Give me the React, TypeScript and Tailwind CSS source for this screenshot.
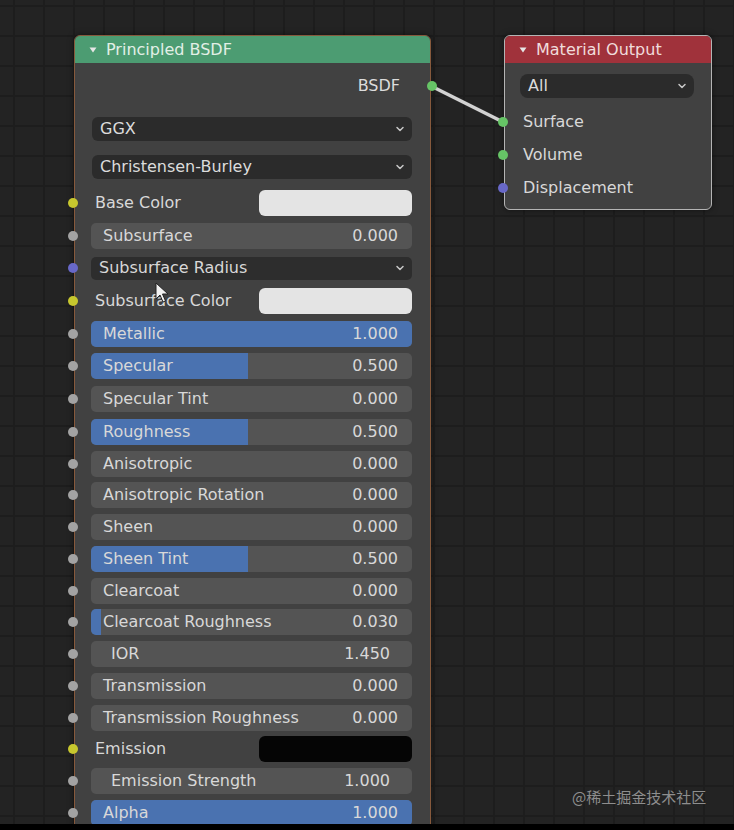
import { ChevronDown } from "lucide-react";

type Row =
	| { kind: "slider"; label: string; value: string; fill: number; socket: string; indent?: boolean }
	| { kind: "color"; label: string; swatch: string; socket: string }
	| { kind: "menu"; label: string; socket: string };

const GREY = "bg-[#a3a3a3]";
const YELLOW = "bg-[#c7c72e]";
const PURPLE = "bg-[#6868c8]";
const GREEN = "bg-[#66c466]";

const rows: Row[] = [
	{ kind: "color", label: "Base Color", swatch: "bg-[#e4e4e4]", socket: YELLOW },
	{ kind: "slider", label: "Subsurface", value: "0.000", fill: 0, socket: GREY },
	{ kind: "menu", label: "Subsurface Radius", socket: PURPLE },
	{ kind: "color", label: "Subsurface Color", swatch: "bg-[#e4e4e4]", socket: YELLOW },
	{ kind: "slider", label: "Metallic", value: "1.000", fill: 100, socket: GREY },
	{ kind: "slider", label: "Specular", value: "0.500", fill: 49, socket: GREY },
	{ kind: "slider", label: "Specular Tint", value: "0.000", fill: 0, socket: GREY },
	{ kind: "slider", label: "Roughness", value: "0.500", fill: 49, socket: GREY },
	{ kind: "slider", label: "Anisotropic", value: "0.000", fill: 0, socket: GREY },
	{ kind: "slider", label: "Anisotropic Rotation", value: "0.000", fill: 0, socket: GREY },
	{ kind: "slider", label: "Sheen", value: "0.000", fill: 0, socket: GREY },
	{ kind: "slider", label: "Sheen Tint", value: "0.500", fill: 49, socket: GREY },
	{ kind: "slider", label: "Clearcoat", value: "0.000", fill: 0, socket: GREY },
	{ kind: "slider", label: "Clearcoat Roughness", value: "0.030", fill: 3, socket: GREY },
	{ kind: "slider", label: "IOR", value: "1.450", fill: 0, socket: GREY, indent: true },
	{ kind: "slider", label: "Transmission", value: "0.000", fill: 0, socket: GREY },
	{ kind: "slider", label: "Transmission Roughness", value: "0.000", fill: 0, socket: GREY },
	{ kind: "color", label: "Emission", swatch: "bg-[#050505]", socket: YELLOW },
	{ kind: "slider", label: "Emission Strength", value: "1.000", fill: 0, socket: GREY, indent: true },
	{ kind: "slider", label: "Alpha", value: "1.000", fill: 100, socket: GREY },
];

function Socket({ color, className = "" }: { color: string; className?: string }) {
	return (
		<span
			className={`absolute top-1/2 -translate-y-1/2 w-[10px] h-[10px] rounded-full ${color} ${className}`}
		></span>
	);
}

function Triangle() {
	return (
		<svg width="8" height="6" viewBox="0 0 8 6" className="shrink-0">
			<path d="M0.5 0.5 L7.5 0.5 L4 5.5 Z" fill="#e6e6e6" />
		</svg>
	);
}

function NodeRow({ row, first, tight }: { row: Row; first: boolean; tight: boolean }) {
	// the video frame packs the lower rows a touch closer than the upper ones
	const spacing = first ? "" : tight ? "mt-[5.75px]" : "mt-[6.7px]";
	return (
		<div className={`relative flex items-center h-[26px] pl-[16px] pr-[18px] ${spacing}`}>
			<Socket color={row.socket} className="left-[-7px]" />
			{row.kind === "slider" && (
				<div className="relative flex-1 h-full rounded-[5px] bg-[#545454] overflow-hidden">
					{row.fill > 0 && (
						<div
							className="absolute inset-y-0 left-0 bg-[#4a72b0]"
							style={{ width: `${row.fill}%` }}
						></div>
					)}
					<div
						className={`relative flex items-center justify-between h-full text-[#d8d8d8] ${
							row.indent ? "pl-[20px] pr-[22px]" : "pl-[12px] pr-[14px]"
						}`}
					>
						<span>{row.label}</span>
						<span>{row.value}</span>
					</div>
				</div>
			)}
			{row.kind === "color" && (
				<div className="flex-1 flex items-center justify-between h-full">
					<span className="pl-[4px] text-[#d8d8d8]">{row.label}</span>
					<div className={`w-[153px] h-full rounded-[6px] ${row.swatch}`}></div>
				</div>
			)}
			{row.kind === "menu" && (
				<div className="flex-1 flex items-center justify-between h-[23px] rounded-[5px] bg-[#2d2d2d] pl-[8px] pr-[6px] text-[#d8d8d8]">
					<span>{row.label}</span>
					<ChevronDown size={12} strokeWidth={3} className="text-[#c8c8c8]" />
				</div>
			)}
		</div>
	);
}

function Dropdown({ label, className = "" }: { label: string; className?: string }) {
	return (
		<div
			className={`flex items-center justify-between h-[24px] rounded-[6px] bg-[#2b2b2b] pl-[8px] pr-[6px] text-[#dcdcdc] ${className}`}
		>
			<span>{label}</span>
			<ChevronDown size={12} strokeWidth={3} className="text-[#c8c8c8]" />
		</div>
	);
}

function PrincipledNode() {
	return (
		<div className="absolute left-[74px] top-[35px] w-[357px] h-[820px] rounded-[6px] border border-[#86593c] bg-[#414141] shadow-[0_0_6px_rgba(0,0,0,0.5)]">
			<div className="flex items-center gap-[9px] h-[27px] pl-[14px] rounded-t-[5px] bg-[#4c9c72] text-[#e2efe6]">
				<Triangle />
				<span>Principled BSDF</span>
			</div>
			<div className="relative flex items-center justify-end h-[24px] mt-[11px] pr-[30px] text-[#dcdcdc]">
				<span>BSDF</span>
				<Socket color={GREEN} className="right-[-7px]" />
			</div>
			<div className="pl-[17px] pr-[18px]">
				<Dropdown label="GGX" className="mt-[19px] h-[23px]" />
				<Dropdown label="Christensen-Burley" className="mt-[14px]" />
			</div>
			<div className="flex flex-col mt-[11px]">
				{rows.map((r, i) => (
					<NodeRow key={r.label} row={r} first={i === 0} tight={i > 7} />
				))}
			</div>
		</div>
	);
}

function OutputNode() {
	return (
		<div className="absolute left-[504px] top-[35px] w-[208px] h-[175px] rounded-[6px] border border-[#b4b4b4] bg-[#414141] shadow-[0_0_6px_rgba(0,0,0,0.5)]">
			<div className="flex items-center gap-[9px] h-[27px] pl-[14px] rounded-t-[5px] bg-[#a0323b] text-[#f0dcdc]">
				<Triangle />
				<span>Material Output</span>
			</div>
			<div className="pl-[15px] pr-[17px]">
				<Dropdown label="All" className="mt-[11px] rounded-[8px]" />
			</div>
			<div className="flex flex-col gap-[9px] mt-[12px] text-[#d8d8d8]">
				{[
					{ label: "Surface", color: GREEN },
					{ label: "Volume", color: GREEN },
					{ label: "Displacement", color: PURPLE },
				].map((s) => (
					<div key={s.label} className="relative flex items-center h-[24px] pl-[18px]">
						<Socket color={s.color} className="left-[-7px]" />
						<span>{s.label}</span>
					</div>
				))}
			</div>
		</div>
	);
}

export default function App() {
	return (
		<div className="w-[734px] h-[830px] bg-black overflow-hidden font-['DejaVu_Sans',sans-serif] text-[16px] leading-none">
			<div className="relative w-[734px] h-[824px] overflow-hidden bg-[#232323] bg-[linear-gradient(to_right,#1d1d1d_2px,transparent_2px),linear-gradient(to_bottom,#1d1d1d_2px,transparent_2px)] bg-[length:30px_30px] bg-[position:13px_5px]">
				<svg className="absolute inset-0 pointer-events-none" width="734" height="824">
					<line x1="431" y1="86" x2="503" y2="122" stroke="#d2d2d2" strokeWidth="3.5" strokeLinecap="round" />
				</svg>
				<PrincipledNode />
				<OutputNode />
				<svg className="absolute left-[155px] top-[282px]" width="14" height="22" viewBox="0 0 14 22">
					<path d="M1 1 L1 17 L5 13 L8 20 L10.5 19 L7.5 12 L13 12 Z" fill="#f2f2f2" stroke="#222" strokeWidth="1" />
				</svg>
				<div className="absolute left-[572px] top-[789px] text-[15px] text-[#8e8e8e] font-['Noto_Sans_CJK_SC',sans-serif]">
					@稀土掘金技术社区
				</div>
			</div>
		</div>
	);
}
